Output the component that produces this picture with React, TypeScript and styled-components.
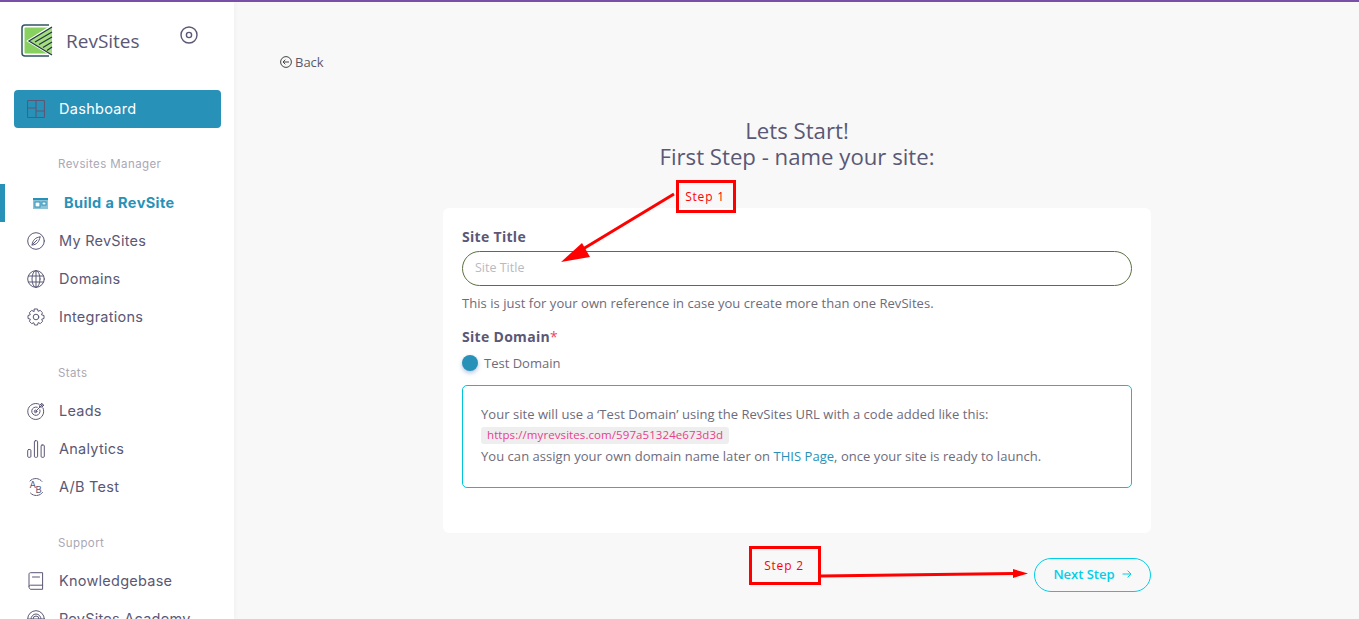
import { ReactNode } from 'react';
import styled, { createGlobalStyle } from 'styled-components';

const NAV_FONT = `'Inter', 'Noto Sans', sans-serif`;
const BODY_FONT = `'Open Sans', 'Noto Sans', sans-serif`;
const INK = '#5a5875';

const Stroke = ({ size = 18, children }: { size?: number; children: ReactNode }) => (
  <svg width={size} height={size} viewBox="0 0 18 18" fill="none" stroke={INK} strokeWidth="1" strokeLinecap="round" strokeLinejoin="round">
    {children}
  </svg>
);

const Logo = () => (
  <svg width="33" height="33" viewBox="0 0 33 33" fill="none">
    <path d="M28 1 H4 C2 1 1 2 1 4 V29 C1 31 2 32 4 32 H28" stroke="#2f5560" strokeWidth="1.5" />
    <rect x="3.5" y="3.5" width="25" height="26" rx="1" fill="#88d060" />
    <path d="M32 1 L7 17 L32 32 Z" fill="#a8dc80" stroke="#fff" strokeWidth="2" />
    <path
      d="M31 3 L8 17 L31 31 M31 8 L14 18 M31 13 L18 20.5 M31 18 L22 23.5 M31 23 L26 26.5"
      stroke="#1c3c40"
      strokeWidth="1.3"
    />
  </svg>
);

const ICONS: Record<string, ReactNode> = {
  compass: (
    <Stroke>
      <circle cx="9" cy="9" r="8.3" />
      <path d="M13 5 C8.5 5.2 5.8 8 5 13 C9.5 12.8 12.2 10 13 5 Z M5 13 L10 8" />
    </Stroke>
  ),
  globe: (
    <Stroke>
      <circle cx="9" cy="9" r="8.3" />
      <ellipse cx="9" cy="9" rx="4" ry="8.3" />
      <path d="M1.5 6 H16.5 M1.5 12 H16.5 M9 .7 V17.3" />
    </Stroke>
  ),
  gear: (
    <Stroke>
      <circle cx="9" cy="9" r="2.8" />
      <path d="M7.5 1 H10.5 L11.1 3.3 L13.2 2.4 L15.5 4.7 L14.5 6.8 L17 7.5 V10.5 L14.7 11.2 L15.6 13.3 L13.3 15.6 L11.2 14.6 L10.5 17 H7.5 L6.8 14.7 L4.7 15.6 L2.4 13.3 L3.4 11.2 L1 10.5 V7.5 L3.3 6.8 L2.4 4.7 L4.7 2.4 L6.8 3.4 Z" />
    </Stroke>
  ),
  leads: (
    <Stroke>
      <path d="M12.2 2.2 A8 8 0 1 0 15.9 5.8" />
      <path d="M10.3 5.2 A4.2 4.2 0 1 0 12.9 7.8" />
      <circle cx="8.6" cy="9.4" r="1.3" />
      <path d="M8.6 9.4 L15 3 M13 3 L15 1.2 V3 H17 L15 5 H13 Z" />
    </Stroke>
  ),
  bars: (
    <Stroke>
      <rect x="0.7" y="9.5" width="3.2" height="7.8" rx="1" />
      <rect x="7.4" y="0.7" width="3.2" height="16.6" rx="1" />
      <rect x="14.1" y="5" width="3.2" height="12.3" rx="1" />
    </Stroke>
  ),
  ab: (
    <Stroke>
      <path d="M3 3 A8 8 0 0 1 15 3.5 M15.5 14.5 A8 8 0 0 1 3 14.5" strokeDasharray="2.6 1" />
      <text x="2.5" y="10" fontSize="9.5" fontFamily="Inter, sans-serif" fill={INK} stroke="none">A</text>
      <text x="8.5" y="14.5" fontSize="9.5" fontFamily="Inter, sans-serif" fill={INK} stroke="none">B</text>
    </Stroke>
  ),
  book: (
    <Stroke>
      <path d="M2 14.5 V2.2 C2 1.3 2.6.7 3.5.7 H15.6 V13.2 H3.4 C2.6 13.2 2 13.8 2 14.7 C2 15.9 2.7 17.3 3.8 17.3 H15.6 V13.2" />
      <path d="M5.5 5 H12.5" />
    </Stroke>
  ),
  academy: (
    <Stroke>
      <circle cx="9" cy="9" r="8.3" />
      <path d="M4 9 A5 5 0 0 1 14 9 M6 9 A3 3 0 0 1 12 9 M1 9 H17" />
    </Stroke>
  ),
};

const NAV_GROUPS = [
  {
    title: 'Revsites Manager',
    gap: 18,
    items: [
      { label: 'Build a RevSite', active: true },
      { label: 'My RevSites', icon: 'compass' },
      { label: 'Domains', icon: 'globe' },
      { label: 'Integrations', icon: 'gear' },
    ],
  },
  {
    title: 'Stats',
    gap: 19,
    items: [
      { label: 'Leads', icon: 'leads' },
      { label: 'Analytics', icon: 'bars' },
      { label: 'A/B Test', icon: 'ab' },
    ],
  },
  {
    title: 'Support',
    gap: 19,
    items: [
      { label: 'Knowledgebase', icon: 'book' },
      { label: 'RevSites Academy', icon: 'academy' },
    ],
  },
];

const App = () => {
  return (
    <>
      <GlobalStyle />
      <S.Page>
        <S.Sidebar>
          <S.Brand>
            <Logo />
            <S.BrandName>RevSites</S.BrandName>
            <S.Pin>
              <svg width="18" height="18" viewBox="0 0 18 18" fill="none" stroke={INK} strokeWidth="1.4">
                <circle cx="9" cy="9" r="8" />
                <circle cx="9" cy="9" r="2.6" />
              </svg>
            </S.Pin>
          </S.Brand>
          <S.DashboardLink>
            <svg width="18" height="18" viewBox="0 0 18 18" fill="none" stroke={INK} strokeWidth="1.1">
              <rect x=".5" y=".5" width="17" height="17" rx="1" />
              <path d="M9 .5 V17.5 M.5 8 H9 M9 11 H17.5" />
            </svg>
            Dashboard
          </S.DashboardLink>
          {NAV_GROUPS.map((group) => (
            <S.NavGroup key={group.title} $gap={group.gap}>
              <S.GroupTitle>{group.title}</S.GroupTitle>
              {group.items.map((item) =>
                item.active ? (
                  <S.ActiveRow key={item.label}>
                    <svg width="15" height="11" viewBox="0 0 15 11">
                      <rect width="15" height="11" fill="#8cc3d9" />
                      <rect y="0" width="15" height="2" fill="#2891b8" />
                      <rect x="2" y="4" width="5" height="5" fill="#fff" stroke="#2891b8" />
                      <rect x="9" y="4" width="4" height="3" fill="#fff" stroke="#2891b8" />
                    </svg>
                    <S.RowText>{item.label}</S.RowText>
                  </S.ActiveRow>
                ) : (
                  <S.NavRow key={item.label}>
                    {ICONS[item.icon as string]}
                    <S.RowText>{item.label}</S.RowText>
                  </S.NavRow>
                ),
              )}
            </S.NavGroup>
          ))}
        </S.Sidebar>

        <S.Main>
          <S.BackLink>
            <svg width="12" height="12" viewBox="0 0 12 12" fill="none" stroke="#444" strokeWidth="1">
              <circle cx="6" cy="6" r="5.4" />
              <path d="M9 6 H3 M5.3 3.7 L3 6 L5.3 8.3" />
            </svg>
            Back
          </S.BackLink>
          <S.Column>
            <S.Heading>
              Lets Start!
              <br />
              First Step - name your site:
            </S.Heading>
            <S.Card>
              <S.FieldLabel>Site Title</S.FieldLabel>
              <S.TitleInput placeholder="Site Title" />
              <S.Hint>This is just for your own reference in case you create more than one RevSites.</S.Hint>
              <S.FieldLabel>
                Site Domain<S.Required>*</S.Required>
              </S.FieldLabel>
              <S.RadioRow>
                <S.RadioDot />
                Test Domain
              </S.RadioRow>
              <S.InfoBox>
                <S.InfoLine>Your site will use a ‘Test Domain’ using the RevSites URL with a code added like this:</S.InfoLine>
                <S.InfoLine>
                  <S.UrlCode>https://myrevsites.com/597a51324e673d3d</S.UrlCode>
                </S.InfoLine>
                <S.InfoLine>
                  You can assign your own domain name later on <S.PageLink>THIS Page</S.PageLink>, once your site is ready to launch.
                </S.InfoLine>
              </S.InfoBox>
            </S.Card>
            <S.Actions>
              <S.NextButton>
                Next Step
                <svg width="10" height="10" viewBox="0 0 10 10" fill="none" stroke="#00cfe8" strokeWidth="1">
                  <path d="M.5 5 H9 M5.6 1.6 L9 5 L5.6 8.4" />
                </svg>
              </S.NextButton>
            </S.Actions>
          </S.Column>
        </S.Main>

        <S.ArrowLayer width="1359" height="619" viewBox="0 0 1359 619">
          <path d="M674 194 L578 252" stroke="#f00" strokeWidth="3" />
          <path d="M561 262 L582 243 L590 257 Z" fill="#f00" />
          <path d="M821 576 L1014 573.5" stroke="#f00" strokeWidth="3" />
          <path d="M1028 573.5 L1013 569 L1013 578 Z" fill="#f00" />
        </S.ArrowLayer>
        <S.StepTag $left={676} $top={180} $width={60} $height={33}>
          Step 1
        </S.StepTag>
        <S.StepTag $left={749} $top={546} $width={72} $height={39}>
          Step 2
        </S.StepTag>
      </S.Page>
    </>
  );
};

export default App;

const GlobalStyle = createGlobalStyle`
  html, body {
    margin: 0;
    height: 100%;
    overflow: hidden;
    background: #f8f8f8;
    font-family: ${BODY_FONT};
  }
  * {
    box-sizing: border-box;
  }
`;

const S = {
  Page: styled.div`
    position: relative;
    display: flex;
    height: 619px;
    overflow: hidden;
    border-top: 2px solid #7a4fa6;
  `,
  Sidebar: styled.aside`
    flex: 0 0 234px;
    background: #fff;
    overflow: hidden;
    box-shadow: 0 0 6px rgba(0, 0, 0, 0.05);
  `,
  Brand: styled.div`
    display: flex;
    align-items: center;
    height: 88px;
    padding: 0 0 12px 21px;
  `,
  BrandName: styled.span`
    margin-left: 12px;
    margin-top: 1px;
    font-size: 19px;
    font-weight: 500;
    color: ${INK};
  `,
  Pin: styled.span`
    display: flex;
    margin-left: 40px;
    margin-top: -10px;
  `,
  DashboardLink: styled.a`
    display: flex;
    align-items: center;
    gap: 14px;
    height: 38px;
    margin: 0 13px 0 14px;
    padding: 0 0 1px 13px;
    border-radius: 4px;
    background: #2891b8;
    color: #fff;
    font-family: ${NAV_FONT};
    font-size: 14.5px;
    letter-spacing: 0.3px;
  `,
  NavGroup: styled.nav<{ $gap: number }>`
    margin-top: ${(p) => p.$gap}px;
  `,
  GroupTitle: styled.div`
    height: 37px;
    padding: 10px 0 0 58px;
    font-family: ${NAV_FONT};
    font-size: 11.5px;
    line-height: 16px;
    letter-spacing: 0.4px;
    color: #a9a8b5;
  `,
  RowText: styled.span`
    margin-top: -2px;
  `,
  NavRow: styled.a`
    display: flex;
    align-items: center;
    gap: 14px;
    height: 38px;
    padding-left: 27px;
    font-family: ${NAV_FONT};
    font-size: 14.5px;
    letter-spacing: 0.25px;
    color: ${INK};
  `,
  ActiveRow: styled.a`
    display: flex;
    align-items: center;
    gap: 16px;
    height: 38px;
    margin-top: 1px;
    border-left: 5px solid #2891b8;
    padding-left: 28px;
    font-family: ${NAV_FONT};
    font-size: 14.5px;
    font-weight: 700;
    letter-spacing: 0.4px;
    color: #2891b8;
  `,
  Main: styled.main`
    flex: 1;
    min-width: 0;
    padding: 50px 0 0 46px;
  `,
  BackLink: styled.a`
    display: flex;
    align-items: center;
    gap: 3px;
    height: 20px;
    font-size: 13px;
    color: #5a5a68;
  `,
  Column: styled.div`
    width: 708px;
    margin: 46px 0 0 163px;
  `,
  Heading: styled.h1`
    margin: 0 0 38px;
    font-size: 22.2px;
    font-weight: 400;
    line-height: 26px;
    text-align: center;
    color: ${INK};
  `,
  Card: styled.section`
    height: 325px;
    padding: 19px 19px 0;
    border-radius: 6px;
    background: #fff;
  `,
  FieldLabel: styled.div`
    font-size: 14px;
    font-weight: 700;
    line-height: 20px;
    letter-spacing: 0.3px;
    color: ${INK};
  `,
  Required: styled.span`
    color: #f0475a;
    font-weight: 400;
  `,
  TitleInput: styled.input`
    display: block;
    width: 100%;
    height: 35px;
    margin-top: 4px;
    padding: 0 12px 2px;
    border: 1px solid #5a7040;
    border-radius: 18px;
    background: #fff;
    outline: none;
    font-family: ${BODY_FONT};
    font-size: 12.5px;
    &::placeholder {
      color: #b9b9c3;
    }
  `,
  Hint: styled.p`
    margin: 8px 0 15px;
    font-size: 13px;
    line-height: 18px;
    letter-spacing: 0.04px;
    color: #6e6b7b;
  `,
  RadioRow: styled.div`
    display: flex;
    align-items: center;
    gap: 6px;
    margin-top: 6px;
    height: 20px;
    padding-bottom: 1px;
    font-size: 13px;
    color: #6e6b7b;
  `,
  RadioDot: styled.span`
    width: 16px;
    height: 16px;
    margin-top: 1px;
    border-radius: 50%;
    background: #2891b8;
    box-shadow: 0 2px 4px rgba(40, 80, 160, 0.35);
  `,
  InfoBox: styled.div`
    height: 103px;
    margin-top: 12px;
    padding: 18px 18px 0;
    border: 1px solid #00c4dc;
    border-radius: 5px;
  `,
  InfoLine: styled.div`
    font-size: 13px;
    line-height: 21px;
    letter-spacing: 0.04px;
    color: #6e6b7b;
  `,
  UrlCode: styled.code`
    display: inline-block;
    height: 17px;
    padding: 0 6px;
    border-radius: 3px;
    background: #eeeeee;
    font-family: ${BODY_FONT};
    font-size: 11.5px;
    line-height: 16px;
    letter-spacing: 0.08px;
    color: #e83e8c;
    transform: translateY(-1px);
  `,
  PageLink: styled.a`
    color: #2891b8;
  `,
  Actions: styled.div`
    display: flex;
    justify-content: flex-end;
    margin-top: 25px;
  `,
  NextButton: styled.button`
    display: flex;
    align-items: center;
    justify-content: center;
    gap: 7px;
    width: 117px;
    height: 34px;
    padding: 0 0 2px;
    border: 1px solid #00cfe8;
    border-radius: 17px;
    background: transparent;
    font-family: ${BODY_FONT};
    font-size: 13px;
    font-weight: 600;
    color: #00cfe8;
  `,
  ArrowLayer: styled.svg`
    position: absolute;
    top: -2px;
    left: 0;
    pointer-events: none;
  `,
  StepTag: styled.div<{ $left: number; $top: number; $width: number; $height: number }>`
    position: absolute;
    left: ${(p) => p.$left}px;
    top: ${(p) => p.$top - 2}px;
    width: ${(p) => p.$width}px;
    height: ${(p) => p.$height}px;
    display: flex;
    align-items: center;
    justify-content: center;
    padding-right: 2px;
    border: 3px solid #f00;
    font-size: 12px;
    letter-spacing: 0.8px;
    color: #f00;
  `,
};
